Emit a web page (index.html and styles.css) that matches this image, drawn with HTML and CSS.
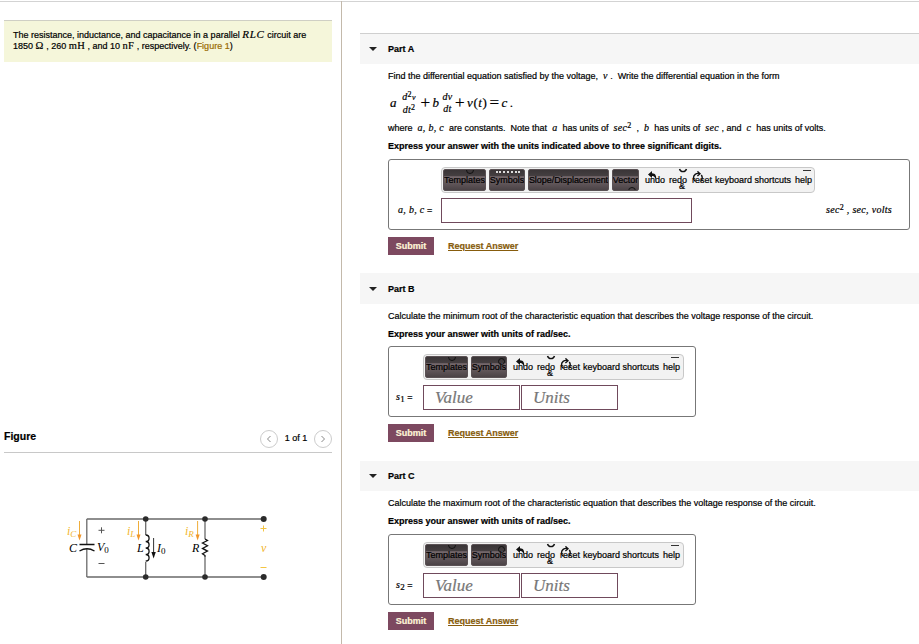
FILE: index.html
```html
<!DOCTYPE html>
<html>
	<head>
		<title>Parallel RLC circuit</title>
		<meta charset="UTF-8">
		<link rel="stylesheet" href="styles.css">
	</head>
	<body>
		<!-- shared toolbar icons -->
		<svg class="defs" width="0" height="0">
			<symbol id="undo-icon" viewBox="0 0 12 10">
				<path d="M1 3.5 L5 0 V2.2 C8.5 2.2 9.8 5 9 9.5 C8 6 7.2 5 5 5 V7 Z" fill="#111" />
			</symbol>
			<symbol id="redo-icon" viewBox="0 0 10 6">
				<path d="M1.5 1 C2.5 4.5 7.5 4.5 8.5 1" fill="none" stroke="#111" stroke-width="1.4" />
			</symbol>
			<symbol id="reset-icon" viewBox="0 0 12 12">
				<path d="M7.5 2.6 C4 1.8 1.5 4 1.5 6.8 C1.5 8.5 2.2 9.8 3.4 10.5 M9.3 4 C10.8 6 10.5 9 8.4 10.5 M5.4 0.4 L8 2.7 L5.4 5" fill="none" stroke="#111" stroke-width="1.4" />
			</symbol>
		</svg>
		<div id="wrapper">
			<div id="left">
				<div class="intro">
					<p class="intro-1">The resistance, inductance, and capacitance in a parallel <i class="m rlc">RLC</i> circuit are</p>
					<p class="intro-2">1850 <span class="m">&Omega;</span> , 260 <span class="m">mH</span> , and 10 <span class="m">nF</span> , respectively. (<a href="#figure">Figure 1</a>)</p>
				</div>
				<div id="figure">
					<div class="figure-head">
						<h2>Figure</h2>
						<div class="pager">
							<span class="circle"><svg width="6" height="8" viewBox="0 0 6 8"><path d="M4.5 1 L1.5 4 L4.5 7" /></svg></span>
							<span class="count">1 of 1</span>
							<span class="circle"><svg width="6" height="8" viewBox="0 0 6 8"><path d="M1.5 1 L4.5 4 L1.5 7" /></svg></span>
						</div>
					</div>
					<svg class="circuit" width="240" height="95" viewBox="50 500 240 95">
						<!-- wires -->
						<g class="wire">
							<path d="M86.8 519 H263.5 M86.8 577 H263.5" />
							<path d="M86.8 519 V544.5 M86.8 549 V577 M145.7 519 V535 M145.7 562 V577 M205 519 V539 M205 557 V577" />
						</g>
						<!-- capacitor, inductor, resistor -->
						<path class="part" d="M79.5 544.5 H94.5 M79.5 551 Q87 546.5 94.5 551" />
						<path class="part" d="M145.7 535 c4.5 0 4.5 6.5 0 6.5 c4.5 0 4.5 6.5 0 6.5 c4.5 0 4.5 6.5 0 6.5 c4.5 0 4.5 6.5 0 6.5" />
						<path class="part" d="M205 539 l2.5 1.5 l-5 2.5 l5 2.7 l-5 2.7 l5 2.7 l-5 2.7 l2.5 1.7 V557" />
						<g fill="#2b2b2b">
							<circle cx="145.7" cy="519" r="2.8" /><circle cx="205" cy="519" r="2.8" /><circle cx="263.7" cy="519" r="3" />
							<circle cx="145.7" cy="577" r="2.8" /><circle cx="205" cy="577" r="2.8" /><circle cx="263.7" cy="577" r="3" />
						</g>
						<!-- current arrows -->
						<g stroke="#f0ae3a" fill="#f0962c">
							<path d="M79.5 521 V535" /><path d="M77.5 534.5 h4 l-2 6 z" stroke="none" />
							<path d="M138.5 521 V535" /><path d="M136.5 534.5 h4 l-2 6 z" stroke="none" />
							<path d="M197.6 521 V535" /><path d="M195.6 534.5 h4 l-2 6 z" stroke="none" />
						</g>
						<path d="M153.6 538 V553" stroke="#333" /><path d="M151.4 552 h4.4 l-2.2 6.5 z" fill="#111" />
						<g class="gold">
							<text x="67" y="535">i<tspan class="sub" dy="2">C</tspan></text>
							<text x="127" y="535">i<tspan class="sub" dy="2">L</tspan></text>
							<text x="185" y="535">i<tspan class="sub" dy="2">R</tspan></text>
							<text x="261" y="552">v</text>
							<path d="M260.5 528.5 h6 M263.5 525.5 v6 M260.5 567.5 h6" stroke="#f4c542" />
						</g>
						<g class="name">
							<text x="69" y="552">C</text>
							<text x="97" y="551">V<tspan class="num" dy="2">0</tspan></text>
							<text x="137" y="552">L</text>
							<text x="157" y="552">I<tspan class="num" dy="2">0</tspan></text>
							<text x="192" y="552">R</text>
						</g>
						<path d="M98.5 530.3 h6 M101.5 527.3 v6 M98.5 563.5 h6" stroke="#555" />
					</svg>
				</div>
			</div>
			<div id="right">
				<div class="part-block part-a">
					<div class="part-head"><span class="caret"></span>Part A</div>
					<div class="part-body">
						<p class="find">Find the differential equation satisfied by the voltage, &nbsp;<i class="m">v</i> . &nbsp;Write the differential equation in the form</p>
						<div class="formula">
							<i>a</i>
							<span class="frac first"><i>d<sup>2</sup><small>v</small></i><i>dt<sup>2</sup></i></span>
							<span class="plus">+</span><i>b</i>
							<span class="frac second"><i>dv</i><i>dt</i></span>
							<span class="plus">+</span><span class="vt"><i>v</i>(<i>t</i>)</span><span class="plus eq">=</span><i>c</i>&thinsp;.
						</div>
						<p class="where">where &nbsp;<i class="m">a, b, c</i>&nbsp; are constants. &nbsp;Note that &nbsp;<i class="m">a</i>&nbsp; has units of &nbsp;<i class="m sec">sec<sup>2</sup></i> &nbsp;, &nbsp;<i class="m">b</i>&nbsp; has units of &nbsp;<i class="m sec">sec</i> , and &nbsp;<i class="m">c</i>&nbsp; has units of volts.</p>
						<p class="express"><b class="long">Express your answer with the units indicated above to three significant digits.</b></p>
						<div class="answer">
							<div class="toolbar">
								<span class="btn templates">Templates</span><span class="btn symbols">Symbols</span><span class="btn slope">Slope/Displacement</span><span class="btn vector">Vector</span>
								<span class="tool undo">undo<svg><use href="#undo-icon" /></svg></span>
								<span class="tool redo">redo<svg><use href="#redo-icon" /></svg><em>&amp;</em></span>
								<span class="tool reset">reset<svg><use href="#reset-icon" /></svg></span>
								<span class="tool keys">keyboard shortcuts</span>
								<span class="tool help">help</span>
							</div>
							<div class="fields">
								<label><i class="m">a, b, c</i> =</label>
								<input type="text" class="wide">
								<span class="units"><i class="m">sec<sup>2</sup> , sec, volts</i></span>
							</div>
						</div>
						<div class="actions">
							<button>Submit</button>
							<a href="#">Request Answer</a>
						</div>
					</div>
				</div>
				<div class="part-block part-b">
					<div class="part-head"><span class="caret"></span>Part B</div>
					<div class="part-body">
						<p class="calc">Calculate the minimum root of the characteristic equation that describes the voltage response of the circuit.</p>
						<p class="express"><b>Express your answer with units of rad/sec.</b></p>
						<div class="answer small">
							<div class="toolbar">
								<span class="btn templates">Templates</span><span class="btn symbols">Symbols</span>
								<span class="tool undo">undo<svg><use href="#undo-icon" /></svg></span>
								<span class="tool redo">redo<svg><use href="#redo-icon" /></svg><em>&amp;</em></span>
								<span class="tool reset">reset<svg><use href="#reset-icon" /></svg></span>
								<span class="tool keys">keyboard shortcuts</span>
								<span class="tool help">help</span>
							</div>
							<div class="fields">
								<label><i class="m">s</i><sub>1</sub> =</label>
								<input type="text" placeholder="Value">
								<input type="text" placeholder="Units">
							</div>
						</div>
						<div class="actions">
							<button>Submit</button>
							<a href="#">Request Answer</a>
						</div>
					</div>
				</div>
				<div class="part-block part-c">
					<div class="part-head"><span class="caret"></span>Part C</div>
					<div class="part-body">
						<p class="calc">Calculate the maximum root of the characteristic equation that describes the voltage response of the circuit.</p>
						<p class="express"><b>Express your answer with units of rad/sec.</b></p>
						<div class="answer small">
							<div class="toolbar">
								<span class="btn templates">Templates</span><span class="btn symbols">Symbols</span>
								<span class="tool undo">undo<svg><use href="#undo-icon" /></svg></span>
								<span class="tool redo">redo<svg><use href="#redo-icon" /></svg><em>&amp;</em></span>
								<span class="tool reset">reset<svg><use href="#reset-icon" /></svg></span>
								<span class="tool keys">keyboard shortcuts</span>
								<span class="tool help">help</span>
							</div>
							<div class="fields">
								<label><i class="m">s</i><sub>2</sub> =</label>
								<input type="text" placeholder="Value">
								<input type="text" placeholder="Units">
							</div>
						</div>
						<div class="actions">
							<button>Submit</button>
							<a href="#">Request Answer</a>
						</div>
					</div>
				</div>
			</div>
		</div>
	</body>
</html>
```
FILE: styles.css
```css
/* common */
* {
	box-sizing: border-box; margin: 0; padding: 0;
}
body {
	background-color: white; color: #000; font: 9px/11px "Liberation Sans", Arial, sans-serif; overflow: hidden; -webkit-text-stroke: 0.2px;
}
.defs {
	display: none;
}
#wrapper {
	display: flex; height: 644px; padding-top: 1px;
	background: linear-gradient(#d3d3d3, #d3d3d3) 0 1px / 100% 1px no-repeat;
}
p {
	white-space: nowrap;
}
.m {
	font-family: "Liberation Serif", serif; font-size: 10px; line-height: 1px; letter-spacing: 0.3px;
}
sup, sub {
	font-size: 8px; line-height: 0; font-style: normal;
}
sup {
	vertical-align: 3px;
}
sub {
	font-family: "Liberation Serif", serif; vertical-align: -2px; font-size: 9px;
}
/* left column */
#left {
	width: 342px; border-right: 1px solid #c3b9ab; padding: 19px 9px 0 4px;
}
.intro {
	height: 42px; background-color: #f5f6da; border-top: 1px solid #cfcfc4; padding: 9px 9px 0;
}
.intro-2 .m {
	font-size: 10.5px;
}
.intro a {
	color: #9a6a00; text-decoration: none;
}
.rlc {
	font-size: 11px; letter-spacing: 0.8px;
}
#figure {
	margin-top: 363px;
}
.figure-head {
	display: flex; justify-content: space-between; height: 28px; border-bottom: 1px solid #c8c8c8;
}
h2 {
	font-size: 10.5px; line-height: 12px; padding-top: 5px;
}
.pager {
	display: flex; height: 27px; align-items: center;
}
.circle {
	display: flex; width: 18px; height: 18px; border: 1px solid #ccc; border-radius: 50%; align-items: center; justify-content: center;
}
.circle path {
	fill: none; stroke: #888;
}
.count {
	width: 36px; text-align: center;
}
/* circuit */
.circuit {
	display: block; margin: 47px 0 0 46px; font: italic 12px "Liberation Serif", serif;
}
.wire path {
	fill: none; stroke: #6a6a6a; stroke-width: 1.3;
}
.part {
	fill: none; stroke: #111; stroke-width: 1.3;
}
.gold text {
	fill: #f2b52c;
}
.circuit .sub {
	font-size: 9px;
}
.circuit .num {
	font-size: 9px; font-style: normal;
}
/* right column */
#right {
	flex: 1; padding: 32px 0 0 18px;
}
.part-a {
	height: 240px;
}
.part-b {
	height: 188px;
}
.part-head {
	display: flex; align-items: center; height: 31px; background-color: #f6f6f6; padding-left: 9px; font-weight: bold; font-size: 9px;
}
.part-a .part-head {
	border-top: 1px solid #cfcfcf;
}
.part-b .part-head {
	padding-top: 1px;
}
.caret {
	border: 4px solid transparent; border-top: 4px solid #222; border-bottom: none; margin-right: 11px;
}
.part-body {
	padding: 7px 0 0 28px;
}
.part-c .part-head {
	height: 30px;
}
.formula {
	display: flex; align-items: center; height: 30px; margin-top: 6px; padding-left: 2px; font: 13px/14px "Liberation Serif", serif; white-space: nowrap;
}
.frac {
	display: flex; flex-direction: column; align-items: center; font-size: 10px; line-height: 12px; letter-spacing: 0.3px;
}
.frac small {
	font-size: 8px;
}
.first {
	width: 17px; margin: 0 3px 0 4px;
}
.second {
	width: 11px; margin: 0 2px 0 3px;
}
.plus {
	width: 12px; font-size: 17px;
}
.vt {
	letter-spacing: 0.6px; margin-right: 2px;
}
.where {
	margin-top: 5px;
}
.express {
	margin-top: 7px;
}
.answer {
	width: 522px; height: 71px; margin-top: 7px; border: 1px solid #777; border-radius: 3px; padding: 7px 0 0 52px;
}
.small {
	width: 308px; padding-left: 34px;
}
.part-b .answer {
	margin-top: 6px;
}
/* toolbar */
.toolbar {
	display: flex; align-items: center; width: 374px; height: 26px; padding-left: 1px; background-color: #f2f2f2; border: 1px solid #c8c8c8; border-radius: 4px; white-space: nowrap;
}
.small .toolbar {
	width: 261px;
}
.btn {
	position: relative; flex: none; height: 22px; margin-right: 3px; border: 1px solid #5b5255; border-radius: 2px; background: linear-gradient(#3a3537 0, #443e40 28%, #76696d 34%, #4b4346 100%); line-height: 21px; display: flex; justify-content: center; overflow: hidden;
}
/* clipped glyphs at the edges of the buttons */
.btn:after {
	content: ""; position: absolute; top: -4px; right: 11px; width: 6px; height: 6px; border: 1px solid #111; border-radius: 50%;
}
.slope:after {
	display: none;
}
.vector:after {
	top: 17px; right: 2px;
}
.symbols:after {
	width: 24px; height: 4px; top: -3px; right: 4px; border: none; border-bottom: 2px dotted #ddd; border-radius: 0;
}
.small .symbols:after {
	top: 1px; right: 1px; width: 5px; height: 5px; border: 1px solid #111; border-radius: 50%;
}
.templates {
	width: 43px;
}
.symbols {
	width: 36px;
}
.slope {
	width: 81px; letter-spacing: -0.05px;
}
.vector {
	width: 27px;
}
.tool {
	position: relative; flex: none;
}
.undo {
	width: 24px; margin-left: 3px;
}
.redo {
	width: 23px;
}
.reset {
	width: 23px;
}
.keys {
	width: 80px;
}
.tool svg, .tool em {
	position: absolute;
}
.undo svg {
	width: 12px; height: 10px; left: 2px; top: -4px;
}
.redo svg {
	width: 10px; height: 6px; left: 9px; top: -7px;
}
.redo em {
	left: 10px; top: 6px; font-style: normal;
}
.reset svg {
	width: 12px; height: 12px; left: 0; top: -4px;
}
.help:after {
	content: ""; position: absolute; right: 1px; top: -5px; width: 8px; height: 1px; background-color: #333;
}
/* answer row */
.fields {
	display: flex; height: 25px; margin: 5px 0 0 -43px; align-items: center;
}
.small .fields {
	margin-left: -27px;
}
label {
	width: 43px; white-space: nowrap;
}
.small label {
	width: 27px;
}
input {
	width: 97px; height: 25px; margin-right: 1px; border: 1px solid #704a5c; padding-left: 11px; font: italic 17px "Liberation Serif", serif;
}
input::placeholder {
	color: #777;
}
.wide {
	width: 251px;
}
.units {
	margin-left: 133px;
}
/* buttons */
.actions {
	display: flex; align-items: center; margin-top: 7px; height: 18px;
}
button {
	width: 46px; height: 18px; border: none; background-color: #7d4960; color: #fff5d8; font: bold 9px "Liberation Sans", sans-serif;
}
.actions a {
	margin-left: 14px; color: #875c0c; font-weight: bold;
}
```
